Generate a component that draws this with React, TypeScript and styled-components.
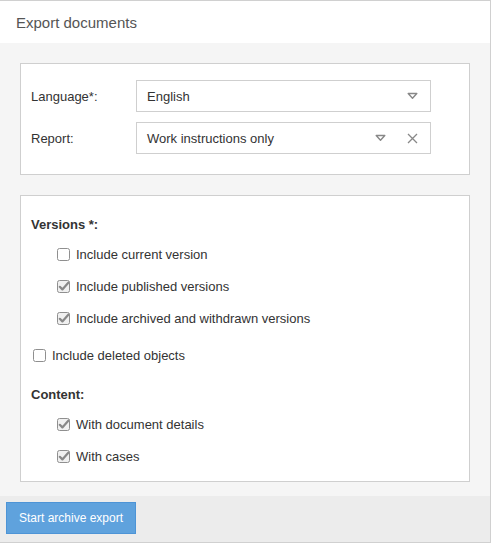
import React from "react";
import styled, { createGlobalStyle } from "styled-components";

const Global = createGlobalStyle`
  html, body { margin: 0; padding: 0; background: #fff; }
  body { font-family: "Liberation Sans", Arial, sans-serif; font-size: 13px; color: #333; }
  * { box-sizing: border-box; }
`;

const Window = styled.div`
  width: 491px;
  height: 543px;
  border: 1px solid #d0d0d0;
  border-left: none;
  display: flex;
  flex-direction: column;
  background: #f5f5f5;
`;

const Header = styled.div`
  height: 42px;
  flex: none;
  background: #fff;
  display: flex;
  align-items: center;
  padding-left: 16px;
  font-size: 15px;
  color: #555;
`;

const Body = styled.div`
  flex: 1;
  padding: 20px 20px 0 20px;
  display: flex;
  flex-direction: column;
  gap: 20px;
`;

const Panel = styled.div<{ $pad: string }>`
  background: #fff;
  border: 1px solid #cfcfcf;
  padding: ${(p) => p.$pad};
  display: flex;
  flex-direction: column;
`;

const FormRow = styled.div`
  display: flex;
  align-items: center;
  margin-bottom: 10px;
`;

const Label = styled.div`
  width: 105px;
  flex: none;
`;

const Select = styled.div`
  width: 295px;
  height: 32px;
  border: 1px solid #cfcfcf;
  display: flex;
  align-items: center;
  padding: 0 12px 0 10px;
  gap: 20px;
`;

const SelectText = styled.span`
  flex: 1;
`;

const IconBox = styled.span`
  display: inline-flex;
  width: 12px;
  justify-content: center;
  align-items: center;
`;

const SectionTitle = styled.div<{ $mt: number }>`
  font-weight: bold;
  line-height: 16px;
  margin-top: ${(p) => p.$mt}px;
  margin-bottom: 5px;
`;

const CheckRow = styled.label<{ $indent: boolean; $mt?: number }>`
  display: flex;
  align-items: center;
  height: 32px;
  padding-left: ${(p) => (p.$indent ? 26 : 2)}px;
  margin-top: ${(p) => p.$mt ?? 0}px;
  gap: 6px;
`;

const Footer = styled.div`
  height: 46px;
  flex: none;
  background: #ececec;
  padding: 6px;
`;

const Button = styled.button`
  width: 130px;
  height: 32px;
  background: #5fa2dd;
  border: 1px solid #4d94d6;
  color: #fff;
  font-family: "Liberation Sans", Arial, sans-serif;
  font-size: 12px;
  padding: 0;
`;

const Triangle = () => (
  <svg width="11" height="8" viewBox="0 0 11 8">
    <path d="M1.2 1.5 H9.8 L5.5 6.3 Z" fill="none" stroke="#888" strokeWidth="1.4" strokeLinejoin="round" />
  </svg>
);

const Cross = () => (
  <svg width="11" height="11" viewBox="0 0 11 11">
    <path d="M1 1 L10 10 M10 1 L1 10" stroke="#888" strokeWidth="1.3" />
  </svg>
);

const Box = ({ checked }: { checked: boolean }) => (
  <svg width="13" height="13" viewBox="0 0 13 13" style={{ flex: "none" }}>
    <rect x="0.5" y="0.5" width="12" height="12" rx="2" fill={checked ? "#f0f0f0" : "#fff"} stroke="#8f8f8f" />
    {checked && (
      <path d="M2.8 6.8 L5.4 9.4 L11.5 2.6" fill="none" stroke="#888" strokeWidth="2.2" strokeLinecap="round" strokeLinejoin="round" />
    )}
  </svg>
);

const Check = ({ label, checked, indent, mt }: { label: string; checked: boolean; indent: boolean; mt?: number }) => (
  <CheckRow $indent={indent} $mt={mt}>
    <Box checked={checked} />
    <span>{label}</span>
  </CheckRow>
);

export default function App() {
  return (
    <>
      <Global />
      <Window>
        <Header>Export documents</Header>
        <Body>
          <Panel $pad="16px 10px 10px 10px">
            <FormRow>
              <Label>Language*:</Label>
              <Select>
                <SelectText>English</SelectText>
                <IconBox><Triangle /></IconBox>
              </Select>
            </FormRow>
            <FormRow>
              <Label>Report:</Label>
              <Select>
                <SelectText>Work instructions only</SelectText>
                <IconBox><Triangle /></IconBox>
                <IconBox><Cross /></IconBox>
              </Select>
            </FormRow>
          </Panel>
          <Panel $pad="0 10px 9px 10px">
            <SectionTitle $mt={21}>Versions *:</SectionTitle>
            <Check label="Include current version" checked={false} indent />
            <Check label="Include published versions" checked indent />
            <Check label="Include archived and withdrawn versions" checked indent />
            <Check label="Include deleted objects" checked={false} indent={false} mt={5} />
            <SectionTitle $mt={16}>Content:</SectionTitle>
            <Check label="With document details" checked indent />
            <Check label="With cases" checked indent />
          </Panel>
        </Body>
        <Footer>
          <Button>Start archive export</Button>
        </Footer>
      </Window>
    </>
  );
}
